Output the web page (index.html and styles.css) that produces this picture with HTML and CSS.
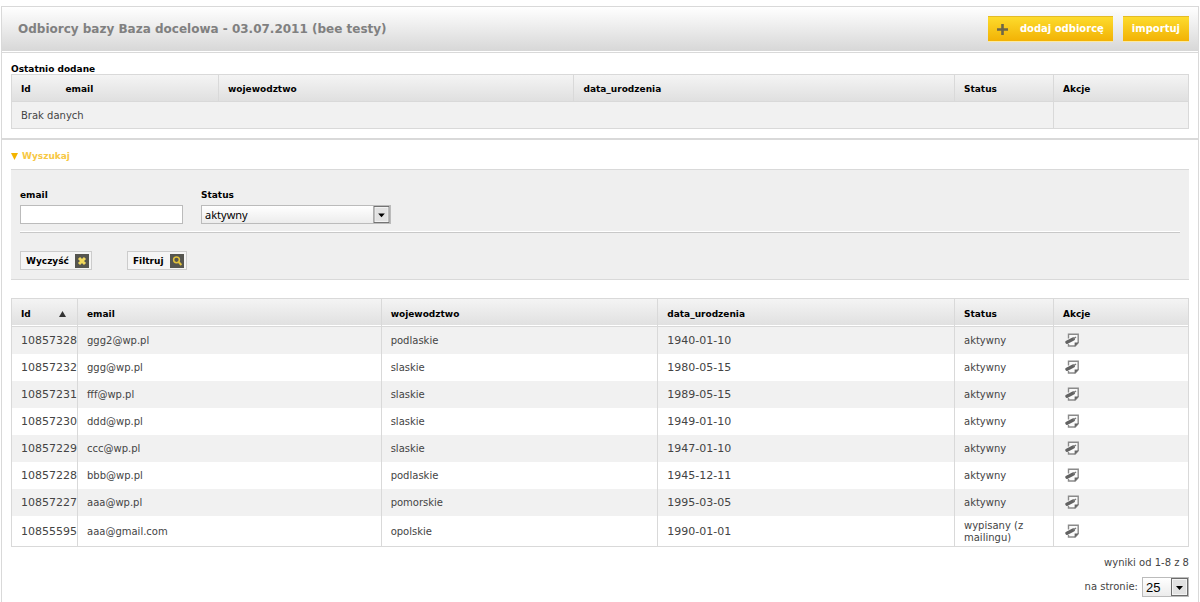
FILE: index.html
```html
<!DOCTYPE html>
<html lang="pl">
<head>
<meta charset="utf-8">
<title>Odbiorcy bazy</title>
<link rel="stylesheet" href="styles.css">
</head>
<body>
<svg width="0" height="0" class="defs" aria-hidden="true">
  <symbol id="edit" viewBox="0 0 14 14">
    <path d="M3.5 5.5V1.2H13.2V9.8L10.2 13H3.5V11" fill="#fafafa" stroke="#8a8a8a" stroke-width="1.4"/>
    <path d="M9.6 13.4V9.4H13.6Z" fill="#666"/>
    <path d="M2 9.2L8.2 6" stroke="#626262" stroke-width="3.4" stroke-linecap="round"/>
    <path d="M8.2 6L11 4" stroke="#777" stroke-width="1.4"/>
  </symbol>
  <symbol id="drop" viewBox="0 0 17 18">
    <rect x=".5" y=".5" width="16" height="17" fill="#f4f4f4" stroke="#6c6c6c"/>
    <rect x="2" y="2" width="13" height="14" fill="#e2e2e2"/>
    <path d="M5 8H12L8.5 12Z" fill="#000"/>
  </symbol>
</svg>
<main class="panel">
  <header class="bar">
    <h1>Odbiorcy bazy Baza docelowa - 03.07.2011 (bee testy)</h1>
    <div class="actions">
      <button type="button" class="gold"><svg width="11" height="11" viewBox="0 0 11 11" aria-hidden="true"><path d="M5.5 0V11M0 5.5H11" stroke="#6e6648" stroke-width="2.6"/></svg>dodaj odbiorcę</button>
      <button type="button" class="gold">importuj</button>
    </div>
  </header>

  <section class="recent">
    <h2>Ostatnio dodane</h2>
    <table class="grid">
      <colgroup><col class="c-rid"><col class="c-remail"><col class="c-rwoj"><col><col class="c-status"><col class="c-actions"></colgroup>
      <thead><tr><th class="open">Id</th><th>email</th><th>wojewodztwo</th><th>data_urodzenia</th><th>Status</th><th>Akcje</th></tr></thead>
      <tbody><tr><td colspan="5">Brak danych</td><td></td></tr></tbody>
    </table>
  </section>

  <section class="search">
    <h2 class="toggle"><svg width="7" height="7" viewBox="0 0 7 7" aria-hidden="true"><path d="M0 0H7L3.5 7Z" fill="#f3b400"/></svg>Wyszukaj</h2>
    <form class="filter">
      <div class="fields">
        <div class="field"><label for="email">email</label><input id="email" type="text"></div>
        <div class="field"><label for="status">Status</label>
          <span class="pick"><select id="status"><option>aktywny</option></select><svg class="arrow" aria-hidden="true"><use href="#drop"/></svg></span></div>
      </div>
      <div class="buttons">
        <button type="button" class="plain">Wyczyść<svg width="14" height="14" viewBox="0 0 14 14" aria-hidden="true"><rect width="14" height="14" fill="#55554f"/><path d="M4 4L10 10M10 4L4 10" stroke="#f2d95c" stroke-width="3"/></svg></button>
        <button type="button" class="plain">Filtruj<svg width="14" height="14" viewBox="0 0 14 14" aria-hidden="true"><rect width="14" height="14" fill="#55554f"/><circle cx="6.5" cy="5.8" r="2.9" fill="none" stroke="#e0c13c" stroke-width="1.5"/><path d="M8.6 8L11.4 11" stroke="#e0c13c" stroke-width="2"/></svg></button>
      </div>
    </form>

    <table class="grid results">
      <colgroup><col class="c-id"><col class="c-email"><col class="c-woj"><col><col class="c-status"><col class="c-actions"></colgroup>
      <thead><tr><th><span class="sort">Id<svg width="7" height="6" viewBox="0 0 7 6" aria-hidden="true"><path d="M0 6H7L3.5 0Z" fill="#333"/></svg></span></th><th>email</th><th>wojewodztwo</th><th>data_urodzenia</th><th>Status</th><th>Akcje</th></tr></thead>
      <tbody>
        <tr><td class="num">10857328</td><td>ggg2@wp.pl</td><td>podlaskie</td><td class="num">1940-01-10</td><td>aktywny</td><td><button type="button" class="edit" aria-label="Edytuj"><svg><use href="#edit"/></svg></button></td></tr>
        <tr><td class="num">10857232</td><td>ggg@wp.pl</td><td>slaskie</td><td class="num">1980-05-15</td><td>aktywny</td><td><button type="button" class="edit" aria-label="Edytuj"><svg><use href="#edit"/></svg></button></td></tr>
        <tr><td class="num">10857231</td><td>fff@wp.pl</td><td>slaskie</td><td class="num">1989-05-15</td><td>aktywny</td><td><button type="button" class="edit" aria-label="Edytuj"><svg><use href="#edit"/></svg></button></td></tr>
        <tr><td class="num">10857230</td><td>ddd@wp.pl</td><td>slaskie</td><td class="num">1949-01-10</td><td>aktywny</td><td><button type="button" class="edit" aria-label="Edytuj"><svg><use href="#edit"/></svg></button></td></tr>
        <tr><td class="num">10857229</td><td>ccc@wp.pl</td><td>slaskie</td><td class="num">1947-01-10</td><td>aktywny</td><td><button type="button" class="edit" aria-label="Edytuj"><svg><use href="#edit"/></svg></button></td></tr>
        <tr><td class="num">10857228</td><td>bbb@wp.pl</td><td>podlaskie</td><td class="num">1945-12-11</td><td>aktywny</td><td><button type="button" class="edit" aria-label="Edytuj"><svg><use href="#edit"/></svg></button></td></tr>
        <tr><td class="num">10857227</td><td>aaa@wp.pl</td><td>pomorskie</td><td class="num">1995-03-05</td><td>aktywny</td><td><button type="button" class="edit" aria-label="Edytuj"><svg><use href="#edit"/></svg></button></td></tr>
        <tr class="tall"><td class="num">10855595</td><td>aaa@gmail.com</td><td>opolskie</td><td class="num">1990-01-01</td><td>wypisany (z mailingu)</td><td><button type="button" class="edit" aria-label="Edytuj"><svg><use href="#edit"/></svg></button></td></tr>
      </tbody>
    </table>

    <footer class="pager">
      <span>wyniki od 1-8 z 8</span>
      <div class="per-page"><label for="per">na stronie:</label>
        <span class="pick small"><select id="per"><option>25</option></select><svg class="arrow" aria-hidden="true"><use href="#drop"/></svg></span></div>
    </footer>
  </section>
</main>
</body>
</html>
```
FILE: styles.css
```css
* { box-sizing: border-box; }
body {
  margin: 0;
  padding: 6px 1px 0;
  background: #fff;
  color: #444;
  font: 10px/12px "DejaVu Sans", Verdana, sans-serif;
}
.defs { position: absolute; }
svg { display: block; flex: none; }
h1, h2 { margin: 0; }
button { font: inherit; cursor: pointer; }

.panel { border: 1px solid #d9d9d9; border-bottom: 0; min-height: calc(100vh - 6px); }
.bar {
  display: flex;
  justify-content: space-between;
  align-items: center;
  height: 46px;
  padding: 0 9px 1px 16px;
  border-bottom: 1px solid #d9d9d9;
  background: linear-gradient(#fff, #d7d7d7) 0 0 / 100% 44px no-repeat;
}
h1 { color: #808080; font-size: 12px; line-height: 14px; }
.actions { display: flex; gap: 10px; }
.gold {
  display: flex;
  align-items: center;
  gap: 12px;
  height: 26px;
  padding: 0 9px;
  border: 0;
  border-top: 1px solid #e3bb26;
  border-bottom: 1px solid #fbe9a0;
  background: linear-gradient(#fddb2c, #f2b205);
  color: #fff;
  font-weight: bold;
}

.recent { padding: 10px 9px 9px; border-bottom: 2px solid #d9d9d9; }
h2 { color: #000; font-size: 9px; line-height: 12px; }
.recent h2 { height: 11px; }

.grid {
  width: 100%;
  table-layout: fixed;
  border-collapse: collapse;
  border: 1px solid #d9d9d9;
}
.grid th, .grid td {
  padding: 2px 9px 0;
  border-left: 1px solid #d9d9d9;
  border-right: 1px solid #d9d9d9;
  text-align: left;
  vertical-align: middle;
}
.grid th { height: 27px; color: #000; font-size: 9px; border-bottom: 1px solid #d9d9d9; }
.grid thead tr { background: linear-gradient(#f4f4f4, #dfdfdf); }
.grid td { height: 27px; }
.grid td:last-child { padding-top: 0; }
.grid tbody tr:nth-child(odd) { background: #f1f1f1; }
.grid th.open, .grid th.open + th { border-right-width: 0; border-left-width: 0; }
.grid th.open { border-left-width: 1px; }
.grid .num { font-size: 11px; padding-right: 0; white-space: nowrap; }
.results th { height: 28px; box-shadow: inset 0 -1px #fff; }
.grid .tall td { height: 31px; }
.c-rid { width: 45px; }
.c-remail { width: 162px; }
.c-rwoj { width: 30.2%; }
.c-id { width: 66px; }
.c-email { width: 25.8%; }
.c-woj { width: 23.5%; }
.c-status { width: 99px; }
.c-actions { width: 135px; }
.sort { display: flex; align-items: center; justify-content: space-between; padding-right: 2px; }
.edit { display: block; padding: 0 0 0 2px; border: 0; background: none; }
.edit svg { width: 14px; height: 14px; }

.search { padding: 10px 9px 0; }
.toggle { display: flex; align-items: center; gap: 4px; color: #f7c843; }
.filter {
  margin: 7px 0 18px;
  padding: 19px 9px 9px;
  border: solid #d9d9d9;
  border-width: 1px 0;
  background: #efefef;
}
.fields {
  display: flex;
  gap: 18px;
  padding-bottom: 8px;
  border-bottom: 1px solid #c8c8c8;
  box-shadow: inset 0 -1px #fff;
}
.field { display: flex; flex-direction: column; gap: 4px; }
.field label { color: #000; font-size: 9px; font-weight: bold; }
input, select {
  height: 19px;
  border: 1px solid #bbb;
  border-radius: 0;
  background: #fff;
  color: #000;
  font: 11px "Noto Sans", Tahoma, sans-serif;
}
input { width: 163px; }
.pick { position: relative; display: block; }
.pick select {
  display: block;
  width: 190px;
  padding: 0 20px 0 3px;
  appearance: none;
  background: linear-gradient(#fff, #ececec);
}
.pick .arrow {
  position: absolute;
  top: 1px;
  right: 1px;
  width: 17px;
  height: 17px;
  pointer-events: none;
}
.pick.small select { width: 47px; height: 20px; font: 13px "Liberation Sans", Arial, sans-serif; }
.pick.small .arrow { height: 18px; }
.buttons { display: flex; gap: 35px; padding-top: 18px; }
.plain {
  display: flex;
  align-items: center;
  gap: 6px;
  height: 19px;
  padding: 0 2px 0 5px;
  border: 1px solid #ccc;
  background: #f5f5f5;
  color: #000;
  font-size: 9px;
  font-weight: bold;
}

.pager { display: flex; flex-direction: column; align-items: flex-end; gap: 8px; padding: 10px 0 6px; }
.per-page { display: flex; align-items: center; gap: 4px; }
```
